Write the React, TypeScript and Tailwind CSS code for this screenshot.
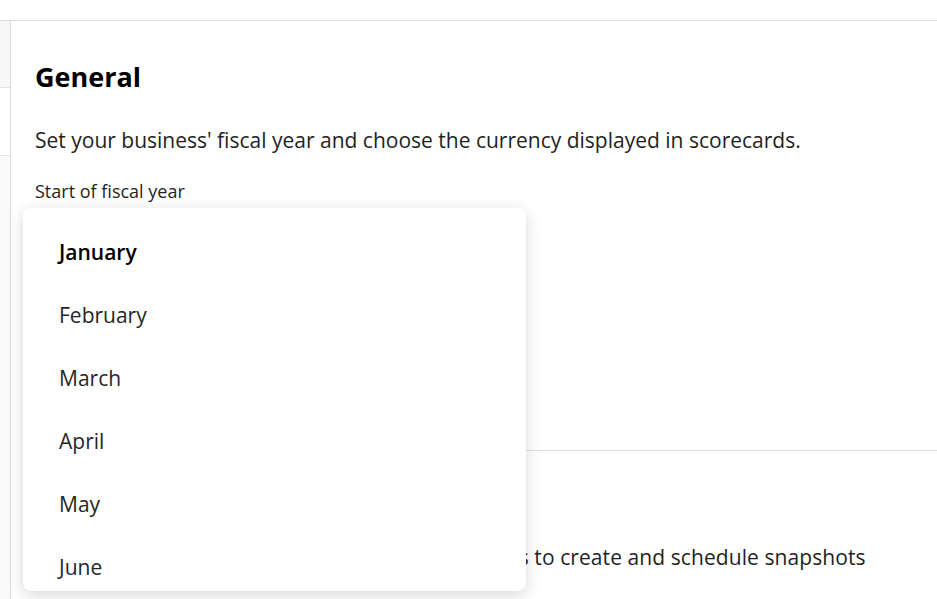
import React from 'react';

const months = ['January', 'February', 'March', 'April', 'May', 'June'];

export default function App() {
    return (
        <div className="relative w-[937px] h-[599px] overflow-hidden bg-white text-[#1f1f1f]" style={{ fontFamily: '"Open Sans", "Noto Sans", sans-serif' }}>
            <div className="h-[21px] border-b border-[#dedede]" />
            <div className="flex h-[578px]">
                <div className="w-[11px] flex flex-col border-r border-[#dedede]">
                    <div className="h-[67px] bg-[#f7f7f7] border-b border-[#e2e2e2]" />
                    <div className="h-[68px] bg-white border-b border-[#e2e2e2]" />
                    <div className="flex-1 bg-[#fafafa]" />
                </div>
                <div className="flex-1 flex flex-col">
                    <section className="ml-6 pt-[40px] h-[430px] border-b border-[#e0e0e0]">
                        <h2 className="text-[27px] leading-[32px] font-bold text-black">General</h2>
                        <p className="mt-[33px] text-[21px] leading-[28px]">Set your business' fiscal year and choose the currency displayed in scorecards.</p>
                        <label className="block mt-[25px] text-[18px] leading-[24px]">Start of fiscal year</label>
                        <div className="mt-[16px] w-[470px] h-[40px] border border-[#ccc] rounded" />
                    </section>
                    <section className="ml-6 pt-[30px]">
                        <h2 className="text-[22px] leading-[30px] font-bold text-black">Snapshots</h2>
                        <p className="mt-[32px] text-[21px] leading-[28px] tracking-[0.08px]">Select which team members have the permissions to create and schedule snapshots</p>
                    </section>
                </div>
            </div>

            <div className="absolute left-[23px] top-[208px] w-[503px] h-[383px] bg-white rounded-lg shadow-[0_4px_16px_rgba(0,0,0,0.16)] pt-[13px]">
                {months.map((m, i) => (
                    <div key={m} className={`h-[63px] flex items-center pl-9 text-[21px] ${i === 0 ? 'font-semibold text-black' : 'text-[#262626]'}`}>
                        {m}
                    </div>
                ))}
            </div>
        </div>
    );
}
